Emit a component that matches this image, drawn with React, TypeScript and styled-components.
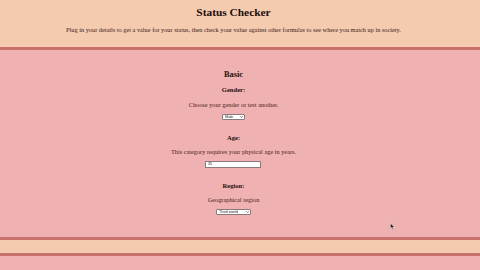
import React from "react";
import styled, { createGlobalStyle } from "styled-components";

const peach = "#f5cbb0";
const pink = "#efb1b1";
const rule = "#c9716d";

const GlobalStyle = createGlobalStyle`
  html, body {
    margin: 0;
    padding: 0;
    background: ${pink};
    font-family: "Liberation Serif", "Times New Roman", serif;
  }
  #root {
    position: relative;
    width: 480px;
    height: 270px;
    overflow: hidden;
  }
`;

const Header = styled.header`
  box-sizing: content-box;
  height: 42px;
  padding: 5px 13px 0 0;
  background: ${peach};
  border-bottom: 3px solid ${rule};
  display: flex;
  flex-direction: column;
  align-items: center;
`;

const Title = styled.h1`
  margin: 0;
  font-size: 11.4px;
  line-height: 14px;
  font-weight: bold;
  color: #1c0f0c;
`;

const Intro = styled.p`
  margin: 6.5px 0 0;
  font-size: 6.3px;
  line-height: 7px;
  color: #3a2018;
`;

const Main = styled.main`
  height: 187px;
  display: flex;
  flex-direction: column;
  align-items: center;
  padding: 20px 13px 0 0;
  box-sizing: border-box;
`;

const SectionTitle = styled.h2`
  margin: 0;
  font-size: 8.4px;
  line-height: 10px;
  font-weight: bold;
  color: #2a1010;
`;

const Field = styled.div<{ $first?: boolean }>`
  display: flex;
  flex-direction: column;
  align-items: center;
  margin-top: ${({ $first }) => ($first ? "6px" : "14px")};
`;

const Label = styled.h3`
  margin: 0;
  font-size: 6.6px;
  line-height: 8px;
  font-weight: bold;
  color: #2a1010;
`;

const Desc = styled.p`
  margin: 6.5px 0 0;
  font-size: 6.3px;
  line-height: 7px;
  color: #4e1e1e;
`;

const Control = styled.div`
  margin-top: 6px;
  display: flex;
  position: relative;
`;

const Select = styled.select<{ $w: number }>`
  appearance: none;
  width: ${({ $w }) => $w}px;
  height: 6px;
  margin: 0;
  padding: 0 0 0 2px;
  box-sizing: border-box;
  border: 0.5px solid #8a7a7a;
  border-radius: 1px;
  background: #ffffff;
  font-family: "Liberation Sans", Arial, sans-serif;
  font-size: 3.8px;
  line-height: 5px;
  color: #222;
  outline: none;
`;

const Chevron = styled.svg`
  position: absolute;
  right: 2px;
  top: 2px;
  width: 3px;
  height: 2px;
  pointer-events: none;
`;

const TextInput = styled.input`
  width: 56px;
  height: 6.5px;
  margin: 0;
  padding: 0 0 0 1.5px;
  box-sizing: border-box;
  border: 0.5px solid #8a7a7a;
  border-radius: 0.5px;
  background: #ffffff;
  font-family: "Liberation Sans", Arial, sans-serif;
  font-size: 3.8px;
  color: #222;
  outline: none;
`;

const Stripe = styled.div`
  height: 13px;
  background: ${peach};
  border-top: 3px solid ${rule};
  border-bottom: 3px solid ${rule};
`;

const Pointer = styled.svg`
  position: absolute;
  left: 390px;
  top: 223px;
  width: 5px;
  height: 7px;
`;

const Dropdown = ({ width, options, value }: { width: number; options: string[]; value: string }) => (
  <Control>
    <Select $w={width} defaultValue={value}>
      {options.map((o) => (
        <option key={o}>{o}</option>
      ))}
    </Select>
    <Chevron viewBox="0 0 6 4">
      <path d="M0.6 0.6 L3 3.2 L5.4 0.6" fill="none" stroke="#222" strokeWidth="1.2" />
    </Chevron>
  </Control>
);

export default function App() {
  return (
    <>
      <GlobalStyle />
      <Header>
        <Title>Status Checker</Title>
        <Intro>
          Plug in your details to get a value for your status, then check your value against other formulas to see
          where you match up in society.
        </Intro>
      </Header>
      <Main>
        <SectionTitle>Basic</SectionTitle>
        <Field $first>
          <Label>Gender:</Label>
          <Desc>Choose your gender or test another.</Desc>
          <Dropdown width={23} options={["Male", "Female"]} value="Male" />
        </Field>
        <Field>
          <Label>Age:</Label>
          <Desc>This category requires your physical age in years.</Desc>
          <Control>
            <TextInput type="text" defaultValue="35" />
          </Control>
        </Field>
        <Field>
          <Label>Region:</Label>
          <Desc>Geographical region</Desc>
          <Dropdown width={35} options={["First world", "Second world", "Third world"]} value="Third world" />
        </Field>
      </Main>
      <Stripe />
      <Pointer viewBox="0 0 10 14">
        <path d="M1 1 L1 11 L3.6 8.6 L5.6 13 L7.2 12.3 L5.2 8 L8.6 8 Z" fill="#111" stroke="#fff" strokeWidth="0.8" />
      </Pointer>
    </>
  );
}
